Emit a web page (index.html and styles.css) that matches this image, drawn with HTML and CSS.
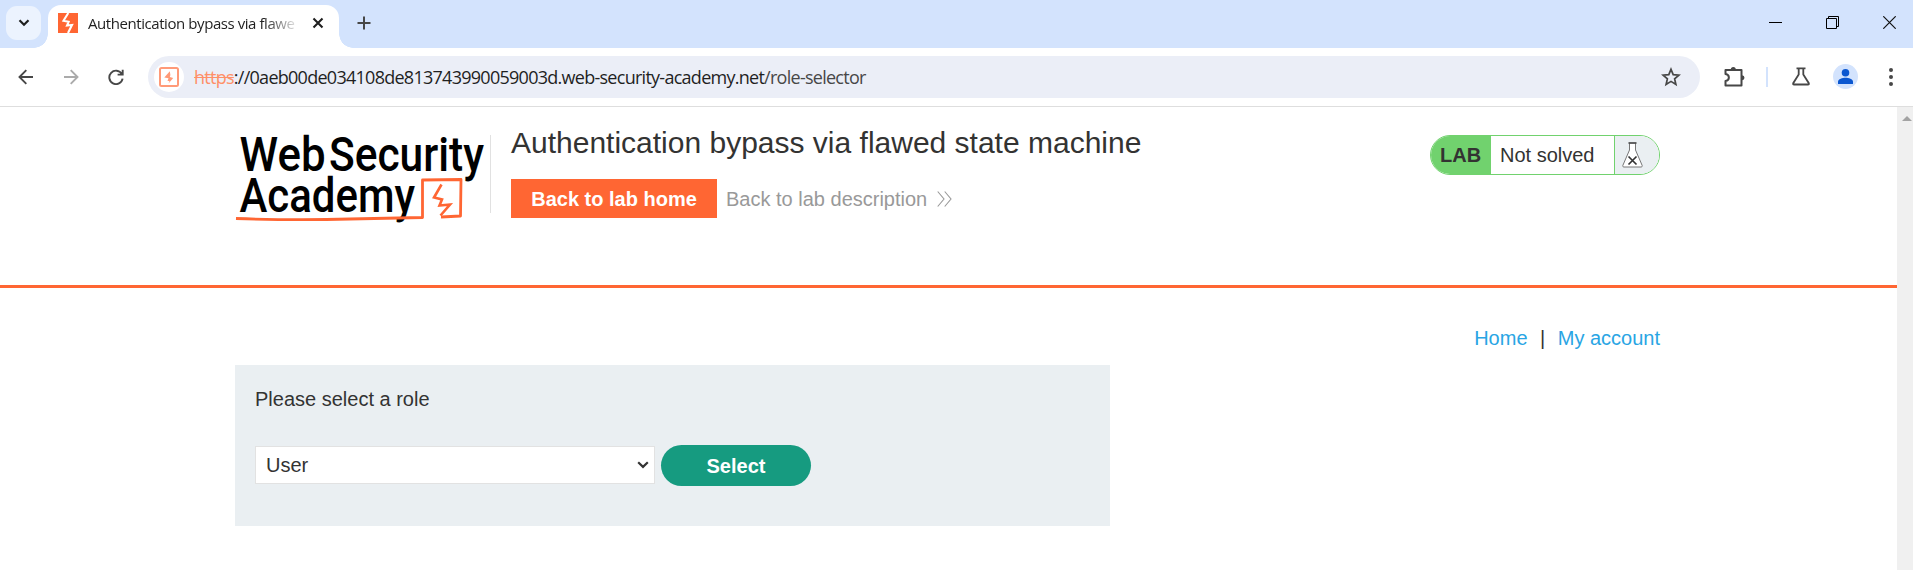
FILE: index.html
```html
<!DOCTYPE html>
<html lang="en">
<head>
<meta charset="utf-8">
<title>Authentication bypass via flawed state machine</title>
<link rel="stylesheet" href="styles.css">
</head>
<body>
<div class="tabstrip">
  <div class="tab-search"><svg width="12" height="8" viewBox="0 0 12 8"><path d="M1.500 1.200 6 5.700l4.500-4.500" fill="none" stroke="#1f1f1f" stroke-width="2.200"/></svg></div>
  <div class="tab">
    <svg width="20" height="20" viewBox="0 0 20 20"><rect width="20" height="20" fill="#ff6633"/><path d="M10.300 0 5.500 7.800 10.600 8.800 9 12.500 14 12 10 20" fill="none" stroke="#fff" stroke-width="2.100"/></svg>
    <span class="tab-title">Authentication bypass via flawe</span>
    <svg class="tab-close" width="12" height="12" viewBox="0 0 12 12"><path d="M1.500 1.500l9 9m0-9l-9 9" stroke="#1f1f1f" stroke-width="2.100"/></svg>
  </div>
  <svg class="new-tab" width="14" height="14" viewBox="0 0 14 14"><path d="M7 .5v13M.5 7h13" stroke="#474747" stroke-width="2"/></svg>
  <div class="window-controls">
    <svg width="13" height="13" viewBox="0 0 13 13"><path d="M0 6.500h13" stroke="#000"/></svg>
    <svg width="13" height="13" viewBox="0 0 13 13"><path d="M.5 2.500h10v10H.5zM2.500 2.500v-2h10v10h-2" fill="none" stroke="#000"/></svg>
    <svg width="13" height="13" viewBox="0 0 13 13"><path d="M.3.3l12.400 12.400m0-12.400L.3 12.700" stroke="#111" stroke-width="1.200"/></svg>
  </div>
</div>
<div class="toolbar">
  <div class="nav-buttons">
    <svg width="16" height="16" viewBox="0 0 16 16"><path d="M15 8H2M8.300 1.200 1.500 8l6.800 6.800" fill="none" stroke="#474747" stroke-width="1.900"/></svg>
    <svg width="16" height="16" viewBox="0 0 16 16"><path d="M1 8h13M7.700 1.200 14.500 8l-6.800 6.800" fill="none" stroke="#ababab" stroke-width="1.900"/></svg>
    <svg width="16" height="16" viewBox="0 0 16 16"><path d="M13.800 5A6.700 6.700 0 1 0 14.600 9.600M14.700.8V5.600H9.600" fill="none" stroke="#474747" stroke-width="1.900"/></svg>
  </div>
  <div class="omnibox">
    <div class="site-icon"><svg width="20" height="20" viewBox="0 0 20 20"><rect x="1" y="1" width="18" height="18" rx="1.500" fill="#fff" stroke="#ff9a78" stroke-width="2"/><path d="M10.800 4.300 5.300 10.500l4.200.8-1 2.700h2l-1 2.500 4.700-5.500-3.400-1 .6-2z" fill="#ff9a78"/></svg></div>
    <div class="url"><span class="scheme">https</span><span class="host">://0aeb00de034108de813743990059003d.web-security-academy.net</span><span class="path">/role-selector</span></div>
    <svg class="star" width="20" height="20" viewBox="0 0 20 20"><path d="M10 2.300l2.200 5.300 5.700.5-4.300 3.700 1.300 5.600-4.900-3-4.900 3 1.300-5.600-4.300-3.700 5.700-.5z" fill="none" stroke="#474747" stroke-width="1.700"/></svg>
  </div>
  <svg class="extensions" width="22" height="22" viewBox="0 0 22 22"><path d="M2.500 4h16v15.500h-16v-4.500c4.500-.7 4.500-6.300 0-7z" fill="none" stroke="#474747" stroke-width="2" stroke-linejoin="round"/><path d="M7.800 3.500a2.500 2.500 0 0 1 5 0zM19 9.200a2.500 2.500 0 0 1 0 5z" fill="#474747"/></svg>
  <span class="separator"></span>
  <svg class="labs" width="18" height="19" viewBox="0 0 18 19"><path d="M4.500 1.400h9M6.700 1.500v6.100L1.200 16.200q-.4 1.300.8 1.300h14q1.200 0 .8-1.300L11.300 7.600V1.500" fill="none" stroke="#474747" stroke-width="1.800"/></svg>
  <svg class="avatar" width="25" height="25" viewBox="0 0 25 25"><circle cx="12.500" cy="12.500" r="12.500" fill="#d3e3fd"/><circle cx="12.500" cy="8.700" r="3.800" fill="#0b57d0"/><path d="M5 20v-2.300c0-2.600 4.500-3.900 7.500-3.900s7.500 1.300 7.500 3.900V20z" fill="#0b57d0"/></svg>
  <svg class="menu" width="4" height="18" viewBox="0 0 4 18"><g fill="#474747"><circle cx="2" cy="2" r="2"/><circle cx="2" cy="9" r="2"/><circle cx="2" cy="16" r="2"/></g></svg>
</div>
<div class="viewport">
  <main class="page">
    <header class="lab-header">
      <div class="container header-row">
        <svg class="logo" width="255" height="90" viewBox="0 0 255 90">
          <g class="logo-text">
            <text x="4.500" y="36" textLength="86" lengthAdjust="spacingAndGlyphs">Web</text>
            <text x="94" y="36" textLength="155" lengthAdjust="spacingAndGlyphs">Security</text>
            <text x="4.500" y="77" textLength="175.500" lengthAdjust="spacingAndGlyphs">Academy</text>
          </g>
          <path d="M1 83.500Q60 85.500 115 84L187.500 82.500V45L226 44.500 225.500 81 206 82" fill="none" stroke="#ff6633" stroke-width="2.800" stroke-linejoin="round"/>
          <path d="M206.500 49.500 199 62.500 207 64.500 204.500 70.500 215 69.500 205.500 80.500" fill="none" stroke="#ff6633" stroke-width="2.600"/>
        </svg>
        <div class="title-block">
          <h2>Authentication bypass via flawed state machine</h2>
          <div class="links">
            <a class="home-button">Back to lab home</a>
            <a class="description">Back to lab description</a>
            <svg width="15" height="16" viewBox="0 0 15 16"><path d="M.7.5 7 8 .7 15.500M7.700.5 14 8l-6.300 7.500" fill="none" stroke="#999" stroke-width="1.100"/></svg>
          </div>
        </div>
        <div class="status">
          <span class="lab">LAB</span><span class="state">Not solved</span>
          <span class="flask"><svg width="21" height="26" viewBox="0 0 21 26"><path d="M7.500 1.500V8L.8 23.500q-.2 1.500 1 1.500h17.400q1.200 0 1-1.500L13.500 8V1.500" fill="#fff" stroke="#777"/><path d="M6.500 1h8" stroke="#333" stroke-width="1.400"/><path d="M6.500 14.500l8 8m0-8l-8 8" stroke="#333" stroke-width="1.700"/></svg></span>
        </div>
      </div>
    </header>
    <div class="container">
      <nav class="account"><a>Home</a><span>|</span><a>My account</a></nav>
      <form class="role-form">
        <label>Please select a role</label>
        <div class="fields">
          <div class="select">User<svg width="12" height="8" viewBox="0 0 12 8"><path d="M1.200 1.300 6 5.900l4.800-4.600" fill="none" stroke="#333" stroke-width="2.200"/></svg></div>
          <button type="button">Select</button>
        </div>
      </form>
    </div>
  </main>
  <div class="scrollbar"></div>
</div>
</body>
</html>
```
FILE: styles.css
```css
* { box-sizing: border-box; }
body { margin: 0; width: 1913px; height: 570px; overflow: hidden; background: #fff; font: 20px/24px "Liberation Sans", Arial, sans-serif; color: #333332; display: flex; flex-direction: column; }
svg { display: block; flex: none; }

.tabstrip { height: 48px; flex: none; display: flex; background: #d3e3fd; }
.tab-search { margin: 6px 7px 0 6px; width: 35px; height: 34px; border-radius: 11px; background: #ecf3fe; display: grid; place-items: center; }
.tab { position: relative; margin-top: 5px; width: 291px; height: 43px; padding: 8px 0 0 10px; display: flex; background: #fff; border-radius: 13px 13px 0 0; }
.tab::before, .tab::after { content: ""; position: absolute; bottom: 0; width: 14px; height: 14px; }
.tab::before { left: -14px; background: radial-gradient(circle at 0 0, transparent 13.500px, #fff 14px); }
.tab::after { right: -14px; background: radial-gradient(circle at 100% 0, transparent 13.500px, #fff 14px); }
.tab-title { margin: 0 0 0 10px; width: 210px; height: 24px; line-height: 21px; white-space: nowrap; font-family: "Open Sans", sans-serif; font-size: 15px; letter-spacing: -.43px; color: #1f1f1f; -webkit-mask-image: linear-gradient(90deg, #000 176px, transparent 212px); mask-image: linear-gradient(90deg, #000 176px, transparent 212px); }
.tab-close { margin: 4px 0 0 14px; }
.new-tab { margin: 16px 0 0 18px; }
.window-controls { margin: 16px 17px 0 auto; display: flex; gap: 44px; }

.toolbar { height: 59px; flex: none; display: flex; align-items: center; background: #fff; padding-bottom: 1px; border-bottom: 1px solid #dedede; }
.nav-buttons { display: flex; gap: 29px; padding-left: 18px; width: 148px; }
.omnibox { width: 1552px; height: 42px; display: flex; align-items: center; border-radius: 21px; background: #ebeef7; }
.site-icon { width: 30px; height: 30px; margin-left: 6px; border-radius: 50%; background: #fff; display: grid; place-items: center; }
.url { margin-left: 10px; font-family: "Open Sans", sans-serif; font-size: 18px; line-height: 24px; white-space: nowrap; color: #1f1f1f; letter-spacing: -.73px; }
.scheme { color: #ff9068; text-decoration: line-through; }
.path { color: #474747; }
.star { margin: 0 19px 0 auto; }
.extensions { margin-left: 23px; }
.separator { width: 2px; height: 20px; margin-left: 21px; background: #d3e3fd; }
.labs { margin-left: 24px; }
.avatar { margin-left: 23px; }
.menu { margin-left: 31px; }

.viewport { flex: 1; display: flex; }
.page { width: 1897px; }
.scrollbar { width: 16px; background: #f0f0f0; padding: 9px 0 0 5px; }
.scrollbar::before { content: ""; display: block; border: 5px solid transparent; border-top: 0; border-bottom-color: #a3a3a3; width: 0; }
.container { width: 1425px; margin-left: 235px; }
.lab-header { height: 181px; border-bottom: 3px solid #ff6633; }
.header-row { display: flex; align-items: flex-start; padding-top: 28px; }
.logo { overflow: visible; }
.logo-text { font-family: Roboto, sans-serif; font-weight: 500; font-size: 48px; fill: #000; }
.title-block { position: relative; padding-left: 21px; }
.title-block::before { content: ""; position: absolute; left: 0; top: 0; height: 78px; border-left: 1px solid #e1e1e1; }
h2 { margin: -10px 0 18px; font-size: 30px; line-height: 36px; font-weight: 400; white-space: nowrap; }
.links { display: flex; align-items: center; }
.home-button { width: 206px; height: 39px; line-height: 40px; text-align: center; background: #ff6633; color: #fff; font-weight: 700; }
.description { margin: 0 10px 0 9px; color: #999; }
.status { margin-left: auto; width: 230px; height: 40px; display: flex; border: 1px solid #71d26e; border-radius: 20px; overflow: hidden; line-height: 38px; }
.lab { width: 60px; background: #71d26e; font-weight: 700; padding-left: 9px; }
.state { width: 123px; padding-left: 9px; }
.flask { flex: 1; padding: 6px 0 0 7px; border-left: 1px solid #71d26e; background: #eaeff2; }

.account { display: flex; justify-content: flex-end; gap: 12.500px; padding-top: 38px; color: #29a5e4; }
.account span { color: #333332; }
.role-form { width: 875px; height: 161px; margin-top: 15px; padding: 22px 20px; background: #eaeff2; }
.role-form label { display: block; }
.fields { display: flex; align-items: flex-start; gap: 6px; margin-top: 34px; }
.select { width: 400px; height: 38px; margin-top: 1px; line-height: 36px; background: #fff; border: 1px solid #e2e2e2; display: flex; align-items: center; justify-content: space-between; padding: 0 5px 0 10px; }
.fields button { width: 150px; height: 41px; padding: 0; border: 0; border-radius: 21px; background: #169b80; color: #fff; font: 700 20px/38px "Liberation Sans", Arial, sans-serif; }
```
